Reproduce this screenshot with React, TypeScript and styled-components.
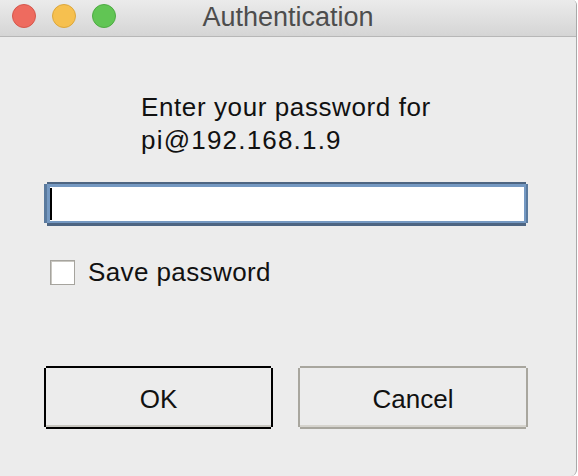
import React from "react";
import styled, { createGlobalStyle } from "styled-components";

const GlobalStyle = createGlobalStyle`
  html, body {
    margin: 0;
    padding: 0;
    background: #ffffff;
  }
  body {
    font-family: "Liberation Sans", Arial, sans-serif;
    -webkit-font-smoothing: antialiased;
  }
`;

const Window = styled.div`
  width: 576px;
  height: 476px;
  background: #ececec;
  border-right: 1px solid #a9a9a9;
  border-top-right-radius: 5px;
  border-bottom-right-radius: 6px;
  overflow: hidden;
  display: flex;
  flex-direction: column;
`;

const TitleBar = styled.div`
  height: 32px;
  padding: 4px 0 0 12px;
  border-bottom: 1px solid #b7b7b7;
  background: linear-gradient(#ebebeb, #d5d5d5);
  display: grid;
  grid-template-columns: 1fr auto 1fr;
  align-items: start;
`;

const Lights = styled.div`
  display: flex;
  gap: 16px;
`;

const Light = styled.span<{ $fill: string; $edge: string }>`
  width: 24px;
  height: 24px;
  box-sizing: border-box;
  border-radius: 50%;
  background: ${(p) => p.$fill};
  border: 1px solid ${(p) => p.$edge};
`;

const Title = styled.div`
  margin-left: -12px;
  margin-top: -2px;
  font-size: 27px;
  line-height: 31px;
  color: #4d4d4d;
`;

const Body = styled.div`
  display: flex;
  flex-direction: column;
  align-items: flex-start;
  padding: 0 48px 0 44px;
`;

const Message = styled.div`
  margin: 54px 0 0 97px;
  font-size: 26px;
  line-height: 33px;
  color: #111111;
`;

const MessageLine = styled.div<{ $spacing: number }>`
  letter-spacing: ${(p) => p.$spacing}px;
`;

const Field = styled.div`
  align-self: stretch;
  margin: 27px 2px 0 3px;
  height: 39px;
  background: #ffffff;
  border-style: solid;
  border-color: #7599c2;
  border-width: 3px 2px 2px 3px;
  box-sizing: border-box;
  box-shadow: 0 -2px 0 0 #4d6582, 0 3px 0 0 #4d6582, -3px 0 0 0 #5a7a9e,
    2px 0 0 0 #5a7a9e;
`;

const Caret = styled.div`
  width: 2px;
  height: 32px;
  margin-top: 1px;
  background: #000000;
`;

const CheckRow = styled.label`
  margin: 37px 0 0 6px;
  display: flex;
  align-items: center;
  gap: 13px;
  font-size: 26px;
  line-height: 25px;
  letter-spacing: 0.4px;
  color: #111111;
`;

const Box = styled.span`
  width: 25px;
  height: 25px;
  box-sizing: border-box;
  background: #ffffff;
  border: 1px solid #a6a49e;
  box-shadow: inset 1px 1px 0 #c9c7c1;
`;

const ButtonRow = styled.div`
  margin: 83px 0 0 2px;
  display: flex;
  gap: 29px;
`;

const Button = styled.button<{ $default?: boolean }>`
  width: ${(p) => (p.$default ? "225px" : "226px")};
  height: 59px;
  border: none;
  background: #ececec;
  font-family: "Liberation Sans", Arial, sans-serif;
  font-size: 26px;
  color: #111111;
  padding: 3px 0 0;
  box-shadow: ${(p) => {
    const c = p.$default ? "#000000" : "#a8a69e";
    const g = p.$default ? "#c8c6c0" : "#d6d4ce";
    return `0 -2px 0 0 ${c}, 0 2px 0 0 ${c}, -2px 0 0 0 ${c}, 2px 0 0 0 ${c}, inset 0 -2px 0 0 ${g}`;
  }};
`;

export default function App() {
  return (
    <>
      <GlobalStyle />
      <Window>
        <TitleBar>
          <Lights>
            <Light $fill="#ee6b5f" $edge="#d5574c" />
            <Light $fill="#f6c04f" $edge="#dca73c" />
            <Light $fill="#61c554" $edge="#4eab43" />
          </Lights>
          <Title>Authentication</Title>
        </TitleBar>
        <Body>
          <Message>
            <MessageLine $spacing={0.6}>Enter your password for</MessageLine>
            <MessageLine $spacing={1.2}>pi@192.168.1.9</MessageLine>
          </Message>
          <Field>
            <Caret />
          </Field>
          <CheckRow>
            <Box />
            Save password
          </CheckRow>
          <ButtonRow>
            <Button $default>OK</Button>
            <Button>Cancel</Button>
          </ButtonRow>
        </Body>
      </Window>
    </>
  );
}
